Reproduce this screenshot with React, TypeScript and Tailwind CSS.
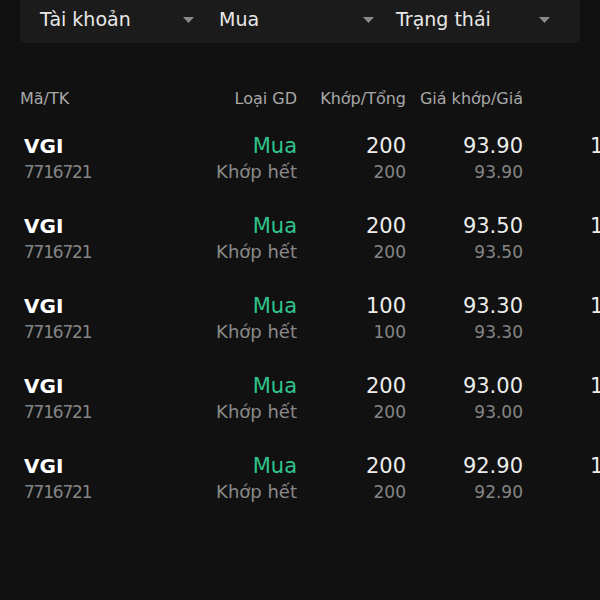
import React from "react";

const rows = [
  { p: "93.90", q: "200" },
  { p: "93.50", q: "200" },
  { p: "93.30", q: "100" },
  { p: "93.00", q: "200" },
  { p: "92.90", q: "200" },
];

function Caret() {
  return (
    <svg width="11" height="6" viewBox="0 0 11 6" className="shrink-0">
      <path d="M0 0 L11 0 L5.5 6 Z" fill="#8a8a8a" />
    </svg>
  );
}

function Drop({ label, w }: { label: string; w: string }) {
  return (
    <div className={`flex items-center justify-between ${w}`}>
      <span className="text-[19px] text-[#e8e8e8]">{label}</span>
      <Caret />
    </div>
  );
}

export default function App() {
  return (
    <div
      className="w-[600px] h-[600px] overflow-hidden bg-[#111111] text-white"
      style={{ fontFamily: "'DejaVu Sans', 'Noto Sans', sans-serif" }}
    >
      <div className="mx-[20px] h-[43px] rounded-b-[6px] bg-[#1b1b1b] flex items-center pb-[4px] pl-[20px] pr-[30px]">
        <Drop label="Tài khoản" w="w-[154px] mr-[25px] shrink-0" />
        <Drop label="Mua" w="w-[155px] mr-[22px] shrink-0" />
        <Drop label="Trạng thái" w="flex-1" />
      </div>

      <div className="flex items-center pl-[20px] mt-[44px] h-[24px] text-[16px] text-[#a8a8a8] whitespace-nowrap">
        <div className="w-[180px] shrink-0">Mã/TK</div>
        <div className="w-[97px] shrink-0 text-right">Loại GD</div>
        <div className="w-[109px] shrink-0 text-right">Khớp/Tổng</div>
        <div className="w-[117px] shrink-0 text-right">Giá khớp/Giá</div>
      </div>

      <div className="mt-[21px] flex flex-col">
        {rows.map((r, i) => (
          <div key={i} className="flex pl-[20px] h-[80px] whitespace-nowrap">
            <div className="w-[180px] shrink-0 pl-[4px] flex flex-col">
              <span className="text-[20px] font-bold leading-[28px] text-white">VGI</span>
              <span className="text-[17px] leading-[24px] tracking-[-1.2px] text-[#858585]">7716721</span>
            </div>
            <div className="w-[97px] shrink-0 flex flex-col items-end">
              <span className="text-[21px] leading-[28px] text-[#2ec48c]">Mua</span>
              <span className="text-[18px] leading-[24px] text-[#8a8a8a]">Khớp hết</span>
            </div>
            <div className="w-[109px] shrink-0 flex flex-col items-end">
              <span className="text-[21px] leading-[28px] text-[#ececec]">{r.q}</span>
              <span className="text-[17px] leading-[24px] text-[#858585]">{r.q}</span>
            </div>
            <div className="w-[117px] shrink-0 flex flex-col items-end">
              <span className="text-[21px] leading-[28px] text-[#ececec]">{r.p}</span>
              <span className="text-[17px] leading-[24px] text-[#858585]">{r.p}</span>
            </div>
            <div className="ml-[67px] shrink-0 flex flex-col">
              <span className="text-[21px] leading-[28px] text-[#ececec]">14:25</span>
            </div>
          </div>
        ))}
      </div>
    </div>
  );
}
